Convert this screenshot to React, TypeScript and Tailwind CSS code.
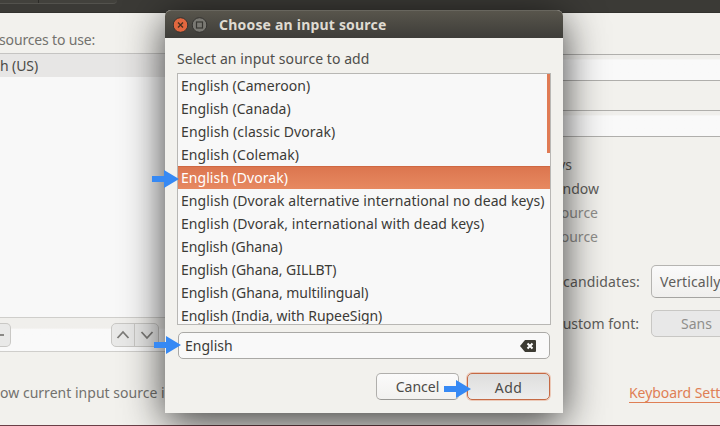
import React from "react";

const sources = [
  { name: "English (Cameroon)", track: "tracking-[0.04px]" },
  { name: "English (Canada)", track: "tracking-[0.02px]" },
  { name: "English (classic Dvorak)", track: "tracking-[0.1px]" },
  { name: "English (Colemak)", track: "tracking-[0.07px]" },
  { name: "English (Dvorak)", track: "tracking-[0.04px]" },
  { name: "English (Dvorak alternative international no dead keys)", track: "tracking-[0.09px]" },
  { name: "English (Dvorak, international with dead keys)", track: "tracking-[0.08px]" },
  { name: "English (Ghana)", track: "tracking-[-0.1px]" },
  { name: "English (Ghana, GILLBT)", track: "tracking-[-0.06px]" },
  { name: "English (Ghana, multilingual)", track: "tracking-[-0.05px]" },
  { name: "English (India, with RupeeSign)", track: "tracking-[-0.05px]" },
];

function Arrow({ className }: { className: string }) {
  return (
    <svg className={"absolute h-[18px] w-[27px] " + className} viewBox="0 0 27 18">
      <path d="M0 6H12V0L27 9L12 18V12H0Z" fill="#3689f4" />
    </svg>
  );
}

function Chevron({ d }: { d: string }) {
  return (
    <svg className="h-[10px] w-[14px]" viewBox="0 0 14 10">
      <path d={d} fill="none" stroke="#7c7b78" strokeWidth="1.8" />
    </svg>
  );
}

function SettingsWindow() {
  return (
    <div className="flex h-[426px] w-[720px] flex-col bg-[#f2f1ed]">
      <div className="h-[13px] shrink-0 border-b border-[#33322e] bg-[#3b3a36]">
        <div className="flex h-1 w-[117px] rounded-br border-b border-[#53524d] bg-[#42413c]">
          <div className="w-[39px] border-r border-[#2c2b28]" />
        </div>
      </div>
      <div className="flex h-[412px] justify-between">
        <div className="w-[300px] overflow-hidden">
          <div className="h-10 pt-[17px] leading-5 tracking-[-0.15px] text-[#73726e]">
            <span className="-ml-px">sources to use:</span>
          </div>
          <div className="h-[24px] border-t border-[#c5c4c2] bg-[#e7e6e5] leading-[24px] tracking-[-0.1px] text-[#4b4a47]">h (US)</div>
          <div className="h-[240px] bg-[#f8f8f8]" />
          <div className="flex h-[35px] items-center border-t border-b border-[#cfcecb] bg-gradient-to-b from-[#f0efec] from-30% to-[#f9f9f9] to-35%">
            <div className="flex h-6 w-[11px] items-center rounded-r-[5px] border border-l-0 border-[#c9c8c5] bg-[#e9e9e8]">
              <div className="h-[2px] w-1 bg-[#8a8986]" />
            </div>
            <div className="ml-[100px] flex h-6 w-12 rounded-[5px] border border-[#c9c8c5] bg-[#e9e9e8]">
              <div className="flex w-6 items-center justify-center border-r border-[#c9c8c5]">
                <Chevron d="M1.5 8L7 2L12.5 8" />
              </div>
              <div className="flex w-6 items-center justify-center">
                <Chevron d="M1.5 2L7 8L12.5 2" />
              </div>
            </div>
          </div>
          <div className="mt-[31px] leading-5 tracking-[0.02px] whitespace-nowrap text-[#73726e]">ow current input source in</div>
        </div>
        <div className="w-[220px] overflow-hidden whitespace-nowrap text-[#5e5d5a]">
          <div className="mt-[41px] h-[27px] border-t border-b border-[#b0afac] bg-gradient-to-b from-[#f0efec] from-15% to-[#f9f9f9] to-20%" />
          <div className="mt-[29px] h-[27px] border-t border-b border-[#b0afac] bg-gradient-to-b from-[#f0efec] from-15% to-[#f9f9f9] to-20%" />
          <div className="mt-[16px] w-[100px] text-right leading-6">
            <div className="w-[72px]">keys</div>
            <div className="w-[99px]">window</div>
            <div className="w-[98px] text-[#8f8e8b]">source</div>
            <div className="w-[98px] text-[#8f8e8b]">source</div>
          </div>
          <div className="mt-[16px] flex h-[33px] items-center">
            <div className="w-[140px] shrink-0 text-right tracking-[0.15px]">candidates:</div>
            <div className="ml-[11px] flex h-[33px] w-[120px] shrink-0 items-center rounded-[5px] border border-[#b5b4b1] border-b-[#a5a4a1] bg-gradient-to-b from-[#fafafa] to-[#f0efed] pl-2 tracking-[0.1px]">Vertically</div>
          </div>
          <div className="mt-[12px] flex h-[27px] items-center">
            <div className="w-[139px] shrink-0 text-right">custom font:</div>
            <div className="ml-[12px] flex h-[27px] w-[120px] shrink-0 items-center rounded-[5px] border border-[#c8c7c4] bg-[#e8e8e8] pl-[29px] text-[#8f8e8b]">Sans</div>
          </div>
          <div className="mt-[46px] pl-[129px] leading-5 tracking-[-0.05px] text-[#df7f55] underline decoration-1 underline-offset-[4px]">Keyboard Sett</div>
        </div>
      </div>
      <div className="h-px bg-[#6b3f47]" />
    </div>
  );
}

function Dialog() {
  return (
    <div className="absolute top-[10px] left-[165px] flex h-[403px] w-[398px] flex-col rounded-t-[6px] bg-[#f2f1ed] shadow-[0_9px_42px_rgba(0,0,0,0.76)]">
      <div className="flex h-7 items-center rounded-t-[6px] border-t border-[#68665e] bg-gradient-to-b from-[#58554c] to-[#3e3d39] pl-2">
        <svg className="h-4 w-[35px]" viewBox="0 0 35 16">
          <circle cx="7.5" cy="8" r="7.3" fill="#e2673f" stroke="#343330" />
          <path d="M5 5.5L10 10.5M10 5.5L5 10.5" stroke="#47301f" strokeWidth="1.3" />
          <circle cx="26.5" cy="8" r="7.3" fill="#7a7973" stroke="#343330" />
          <rect x="23.5" y="5" width="6" height="6" fill="none" stroke="#383733" strokeWidth="1.2" />
        </svg>
        <div className="ml-[11px] font-bold tracking-[0.2px] whitespace-nowrap text-[#dfdbd2]">Choose an input source</div>
      </div>
      <div className="flex flex-col px-3">
        <div className="mt-[11px] leading-5 tracking-[0.06px] text-[#4f4e4b]">Select an input source to add</div>
        <div className="mt-1 flex h-[252px] w-[374px] overflow-hidden border border-[#b8b7b4] bg-[#f8f8f8]">
          <div className="flex-1">
            {sources.map((s) => (
              <div
                key={s.name}
                className={
                  "h-[23px] pl-[3px] whitespace-nowrap " +
                  s.track +
                  (s.name === "English (Dvorak)"
                    ? " -mr-[3px] border-t border-[#cf6843] bg-gradient-to-b from-[#dc764f] to-[#e78961] leading-[21px] text-white"
                    : " leading-[23px] text-[#3c3b37]")
                }
              >
                {s.name}
              </div>
            ))}
          </div>
          <div className="h-[79px] w-[3px] bg-[#e07b54]" />
        </div>
        <div className="mt-[7px] ml-px flex h-[27px] w-[372px] items-center justify-between rounded-[5px] border border-[#aaa9a6] bg-[#f9f9f9] pr-[13px] pl-[6px] text-[#3c3b37]">
          <span>English</span>
          <svg className="h-3 w-4" viewBox="0 0 16 12">
            <path d="M0 6L5 0H15Q16 0 16 1V11Q16 12 15 12H5Z" fill="#3c3b33" />
            <path d="M7.5 3.5L12.5 8.5M12.5 3.5L7.5 8.5" stroke="#fff" strokeWidth="2" />
          </svg>
        </div>
        <div className="mt-[14px] flex justify-end gap-2 pr-px text-[#4c4b48]">
          <div className="flex h-[27px] w-[83px] items-center justify-center rounded-[5px] border border-[#b0afac] border-b-[#9a9996] bg-gradient-to-b from-[#fbfbfb] to-[#f2f1ef]">Cancel</div>
          <div className="flex h-[27px] w-[83px] items-center justify-center rounded-[5px] border border-[#c56a45] bg-gradient-to-b from-[#dededd] to-[#ededed] pt-[2px] tracking-[0.4px] ring-1 ring-[#ecc9b8]">Add</div>
        </div>
      </div>
    </div>
  );
}

export default function App() {
  return (
    <div className="relative h-[426px] w-[720px] overflow-hidden font-['Noto_Sans',sans-serif] text-[14px]">
      <SettingsWindow />
      <Dialog />
      <Arrow className="top-[170px] left-[152px]" />
      <Arrow className="top-[336px] left-[154px]" />
      <Arrow className="top-[380px] left-[444px]" />
    </div>
  );
}
